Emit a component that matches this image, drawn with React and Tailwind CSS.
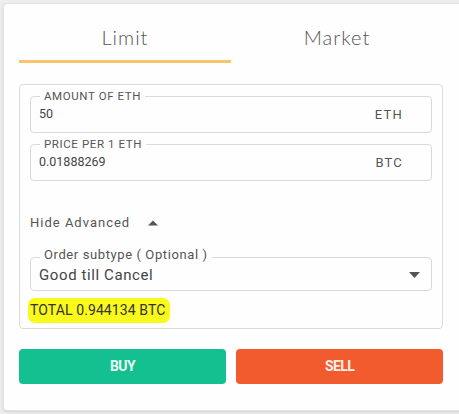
import React, { useState } from 'react';

const roboto = { fontFamily: 'Roboto, "Liberation Sans", sans-serif' };

function Field({ label, value, unit }) {
  return (
    <div className="relative h-[37px] border border-[#dadada] rounded-[4px] flex items-center justify-between pl-[8px] pr-[28px]">
      <span className="absolute -top-[8px] left-[9px] px-[4px] bg-[#fefefe] text-[11.5px] leading-[14px] tracking-[0.6px] text-[#555]">{label}</span>
      <span className="text-[12.5px] text-[#444]">{value}</span>
      <span className="text-[13px] tracking-[1.2px] text-[#555]">{unit}</span>
    </div>
  );
}

export default function App() {
  const [tab, setTab] = useState('limit');

  return (
    <div className="w-[459px] h-[414px] bg-[#eeeeee] pt-[3px] pl-[3px] overflow-hidden" style={roboto}>
      <div className="w-[462px] h-[408px] bg-[#fefefe] border border-[#e3e3e3] rounded-[4px] shadow-[0_1px_3px_rgba(0,0,0,0.12)] px-[15px]">
        <div className="flex w-[424px]">
          <button
            onClick={() => setTab('limit')}
            className={`w-1/2 pt-[19px] pb-[9px] border-b-[3px] text-[20px] leading-[28px] font-light tracking-[1px] text-[#555] ${tab === 'limit' ? 'border-[#f6c66d]' : 'border-transparent'}`}
            style={{ fontFamily: 'Lato, "Open Sans", sans-serif' }}
          >
            Limit
          </button>
          <button
            onClick={() => setTab('market')}
            className={`w-1/2 pt-[19px] pb-[9px] border-b-[3px] text-[20px] leading-[28px] font-light tracking-[1px] text-[#555] ${tab === 'market' ? 'border-[#f6c66d]' : 'border-transparent'}`}
            style={{ fontFamily: 'Lato, "Open Sans", sans-serif' }}
          >
            Market
          </button>
        </div>

        <div className="mt-[21px] w-[424px] border border-[#dcdcdc] rounded-[4px] px-[10px] pt-[11px] pb-[5px]">
          <Field label="AMOUNT OF ETH" value="50" unit="ETH" />
          <div className="mt-[11px]">
            <Field label="PRICE PER 1 ETH" value="0.01888269" unit="BTC" />
          </div>

          <div className="mt-[32px] flex items-center h-[20px] text-[13px] tracking-[1px] text-[#555]">
            <span>Hide Advanced</span>
            <svg className="ml-[18px]" width="10" height="6" viewBox="0 0 10 6">
              <path d="M0 5.5 L5 0.5 L10 5.5 Z" fill="#555" />
            </svg>
          </div>

          <div className="mt-[24px] relative h-[34px] border border-[#dadada] rounded-[4px] flex items-center justify-between pl-[8px] pr-[11px]">
            <span className="absolute -top-[11px] left-[9px] px-[4px] bg-[#fefefe] text-[13px] leading-[16px] tracking-[0.6px] text-[#555]">Order subtype ( Optional )</span>
            <span className="pt-[2px] text-[15px] tracking-[0.6px] text-[#444]">Good till Cancel</span>
            <svg width="11" height="6" viewBox="0 0 11 6" className="mt-[2px]">
              <path d="M0 0 L11 0 L5.5 6 Z" fill="#555" />
            </svg>
          </div>

          <div className="mt-[7px] flex">
            <span className="-ml-[2px] pl-[2px] pr-[5px] h-[25px] flex items-center bg-[#f9f91c] rounded-[7px] text-[14px] tracking-[0.1px] text-[#333]">
              TOTAL 0.944134 BTC
            </span>
          </div>
        </div>

        <div className="mt-[20px] w-[424px] flex gap-[10px]">
          <button className="flex-1 h-[35px] rounded-[4px] bg-[#14c08f] text-[#e6fff6] text-[14px] font-bold tracking-[-0.6px]">
            BUY
          </button>
          <button className="flex-1 h-[35px] rounded-[4px] bg-[#f15b2d] text-[#fff0ea] text-[14px] font-bold tracking-[-0.6px]">
            SELL
          </button>
        </div>
      </div>
    </div>
  );
}
